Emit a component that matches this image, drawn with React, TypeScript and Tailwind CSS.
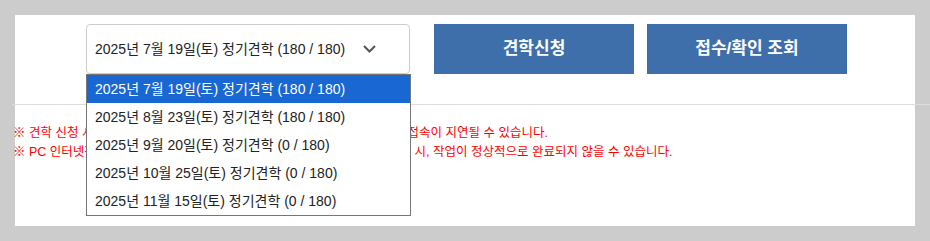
import React from 'react';

const tours = [
  '2025년 7월 19일(토) 정기견학 (180 / 180)',
  '2025년 8월 23일(토) 정기견학 (180 / 180)',
  '2025년 9월 20일(토) 정기견학 (0 / 180)',
  '2025년 10월 25일(토) 정기견학 (0 / 180)',
  '2025년 11월 15일(토) 정기견학 (0 / 180)',
];

const font = { fontFamily: '"Liberation Sans", "Noto Sans CJK KR", sans-serif' };

export default function App() {
  return (
    <div className="w-[930px] h-[241px] bg-[#cccccc] pt-[15px] pl-[15px] overflow-hidden" style={font}>
      <div className="relative w-[900px] h-[211px] bg-white">
        {/* Top row */}
        <div className="flex pt-[9px] pl-[71px]">
          <div className="w-[324px] h-[50px] border border-[#cccccc] rounded-[4px] flex items-center justify-between pl-[8px] pr-[33px] text-[14px] text-[#222222]">
            <span>{tours[0]}</span>
            <svg width="13" height="8" viewBox="0 0 13 8" fill="none">
              <path d="M1 1L6.5 6.5L12 1" stroke="#555555" strokeWidth="2" />
            </svg>
          </div>
          <button className="ml-[24px] w-[200px] h-[50px] bg-[#3f6fab] text-white text-[17px] font-bold">
            견학신청
          </button>
          <button className="ml-[13px] w-[200px] h-[50px] bg-[#3f6fab] text-white text-[17px] font-bold">
            접수/확인 조회
          </button>
        </div>

        <div className="mt-[30px] -ml-[3px] w-[918px] border-t border-[#dddddd]" />

        {/* Notes */}
        <div className="mt-[19px] -ml-[2px] text-[12.5px] leading-[19px] text-[#ff0000]">
          <p>※ 견학 신청 시 동시 접속자가 많은 경우에 신청 페이지의 화면 전환 및 서버 접속이 지연될 수 있습니다.</p>
          <p>※ PC 인터넷창을 여러 개 띄워놓거나 여러 기기에서도 동시에 견학을 신청할 시, 작업이 정상적으로 완료되지 않을 수 있습니다.</p>
        </div>

        {/* Open select list */}
        <ul className="absolute top-[59px] left-[71px] w-[325px] bg-white border border-[#767676] text-[14px] text-[#222222]">
          {tours.map((t, i) => (
            <li
              key={t}
              className={`h-[28px] flex items-center pl-[8px] ${
                i === 0 ? 'bg-[#1967d2] text-white' : ''
              }`}
            >
              {t}
            </li>
          ))}
        </ul>
      </div>
    </div>
  );
}
